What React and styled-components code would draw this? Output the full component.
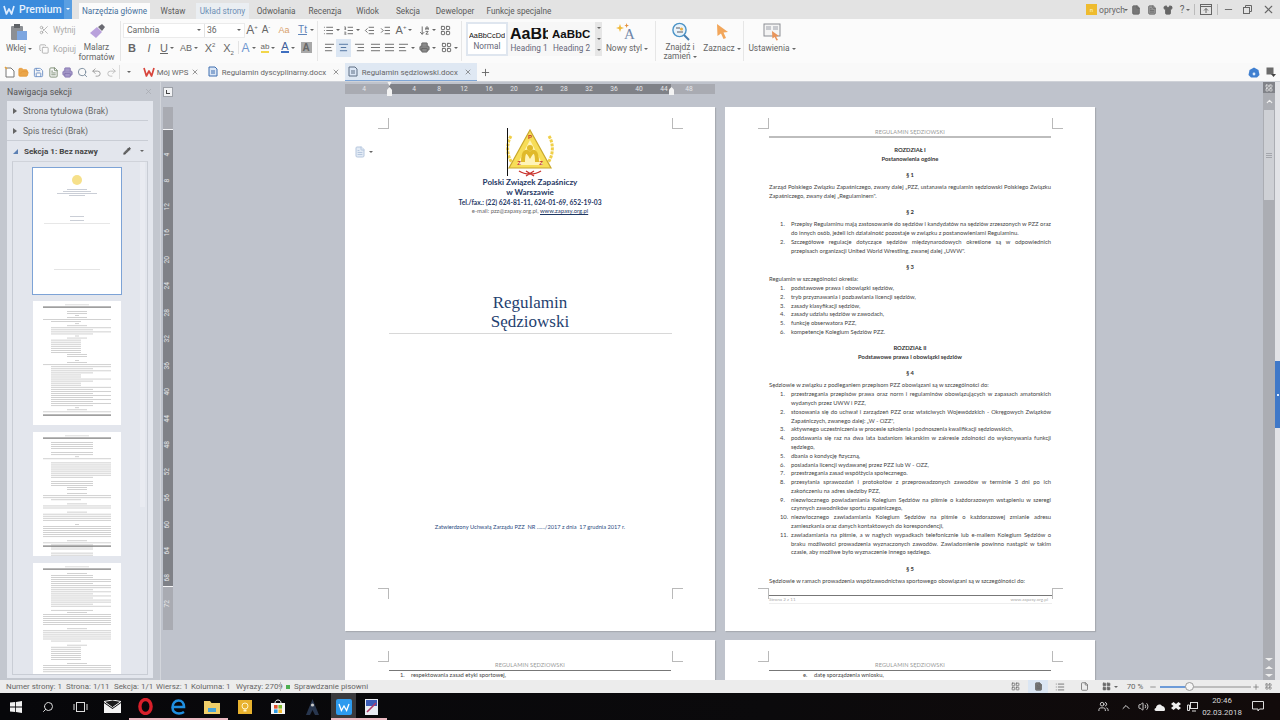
import styled, { createGlobalStyle } from 'styled-components';
import {
  AlignCenter, AlignJustify, AlignLeft, AlignRight, ArrowDownAZ, ChevronUp, Copy, File, FileText,
  FolderOpen, IndentDecrease, IndentIncrease, LayoutGrid, List, ListOrdered, Minus, Pencil, Plus,
  Printer, Redo2, Save, Scissors, Search, Shirt, Undo2, Users, Volume2, X,
} from 'lucide-react';

const GlobalStyle = createGlobalStyle`
  html, body { margin: 0; padding: 0; background: #bfc3cc; overflow: hidden; }
  * { box-sizing: border-box; }
  #root { width: 1280px; height: 720px; }
`;

const Shell = styled.div`
  width: 1280px;
  height: 720px;
  display: flex;
  flex-direction: column;
  font-family: Roboto, "Open Sans", sans-serif;
  color: #555;
  overflow: hidden;
`;

/* title bar */
const TitleBar = styled.div`
  height: 19px;
  flex: none;
  display: flex;
  background: #e3e3e3;
`;
const PremiumButton = styled.div`
  width: 72px;
  height: 19px;
  display: flex;
  align-items: center;
  background: linear-gradient(90deg, #3a8bdc 0 64px, #5a9fe2 64px);
  color: #e8f2fc;
  font-size: 10.5px;
  font-weight: 500;
  padding-left: 3px;
  gap: 4px;
  margin-right: 7px;
  position: relative;
`;
const WhiteCaret = styled.span`
  position: absolute;
  right: 2px;
  top: 8px;
  border: 2.5px solid transparent;
  border-top-color: #fff;
`;
const Tab = styled.div`
  width: ${(p) => p.$w}px;
  margin-top: 3px;
  height: 16px;
  display: flex;
  align-items: center;
  justify-content: center;
  font-size: 8.2px;
  white-space: nowrap;
  color: ${(p) => (p.$active ? '#47719c' : p.$soft ? '#6d8fb5' : '#5a5a5a')};
  background: ${(p) => (p.$active ? '#fbfbfb' : p.$soft ? '#eaeef2' : 'transparent')};
`;
const TitleRight = styled.div`
  margin-left: auto;
  display: flex;
  align-items: center;
  height: 19px;
  padding-right: 1px;
`;
const Cell = styled.div`
  width: ${(p) => p.$w}px;
  height: ${(p) => p.$h || 16}px;
  flex: none;
  display: flex;
  align-items: center;
  justify-content: center;
  gap: ${(p) => p.$gap || 2}px;
  color: ${(p) => p.$c || '#666'};
  background: ${(p) => p.$bg || 'transparent'};
  font-size: ${(p) => p.$fs || 9}px;
`;
const UserBadge = styled.div`
  width: 11px;
  height: 11px;
  background: #eebb2e;
  color: #fff3c8;
  font-size: 6px;
  display: flex;
  align-items: center;
  justify-content: center;
  margin-right: 2px;
`;
const UserName = styled.span`
  font-size: 8.6px;
  color: #666;
  width: 25px;
`;
const Divider = styled.div`
  width: 1px;
  height: ${(p) => p.$h || 11}px;
  flex: none;
  background: ${(p) => p.$c || '#bbb'};
`;
const Caret = styled.span`
  flex: none;
  width: 0;
  height: 0;
  border: 2px solid transparent;
  border-top: 2.5px solid #666;
  border-bottom: 0;
`;

/* ribbon */
const Ribbon = styled.div`
  height: 44px;
  flex: none;
  display: flex;
  align-items: center;
  background: #fbfbfb;
`;
const RibbonSep = styled.div`
  width: 1px;
  height: 40px;
  flex: none;
  background: #e6e6e6;
`;
const Group = styled.div`
  width: ${(p) => p.$w}px;
  height: 44px;
  flex: none;
  display: flex;
  flex-direction: ${(p) => (p.$col ? 'column' : 'row')};
  padding-top: 3px;
`;
const BigTool = styled.div`
  width: ${(p) => p.$w}px;
  flex: none;
  display: flex;
  flex-direction: column;
  align-items: center;
  font-size: 8.4px;
  line-height: 9.5px;
  color: #666;
  text-align: center;
`;
const BigIcon = styled.div`
  height: 19px;
  margin-bottom: ${(p) => p.$mb ?? 2}px;
  display: flex;
  align-items: center;
  justify-content: center;
`;
const SmallTools = styled.div`
  width: 40px;
  flex: none;
  display: flex;
  flex-direction: column;
  gap: 4px;
  padding-left: 1px;
`;
const SmallTool = styled.div`
  height: 15px;
  display: flex;
  align-items: center;
  gap: 4px;
  font-size: 8.3px;
  color: #aaa;
`;
const Row = styled.div`
  height: ${(p) => p.$h || 16}px;
  display: flex;
  align-items: center;
  padding-left: ${(p) => p.$pl || 0}px;
`;
const FontBox = styled.div`
  width: 122px;
  height: 15px;
  flex: none;
  display: flex;
  align-items: center;
  background: #fff;
  border: 1px solid #ebebeb;
  font-size: 8.6px;
  color: #666;
`;
const FontName = styled.div`
  width: 81px;
  padding-left: 3px;
  display: flex;
  align-items: center;
  justify-content: space-between;
  padding-right: 3px;
  border-right: 1px solid #e3e3e3;
  height: 100%;
`;
const FontSize = styled.div`
  flex: 1;
  padding-left: 2px;
  padding-right: 3px;
  display: flex;
  align-items: center;
  justify-content: space-between;
`;
const Letter = styled.span`
  font-family: "Liberation Sans", sans-serif;
  font-size: ${(p) => p.$fs || 11}px;
  font-weight: ${(p) => (p.$bold ? 700 : 400)};
  font-style: ${(p) => (p.$it ? 'italic' : 'normal')};
  text-decoration: ${(p) => (p.$u ? 'underline' : 'none')};
  color: ${(p) => p.$c || '#666'};
  border-bottom: ${(p) => (p.$bar ? `2px solid ${p.$bar}` : 'none')};
  line-height: ${(p) => (p.$bar ? '9px' : '12px')};
  white-space: nowrap;
`;
const Sup = styled.sup`
  font-size: 6px;
  line-height: 0;
`;
const Sub = styled.sub`
  font-size: 6px;
  line-height: 0;
`;
const HighlightA = styled.span`
  width: 11px;
  height: 11px;
  background: #a8a8a8;
  color: #666;
  font-family: "Liberation Sans", sans-serif;
  font-weight: 700;
  font-size: 10px;
  display: flex;
  align-items: center;
  justify-content: center;
`;
const Gallery = styled.div`
  width: 136px;
  height: 34px;
  margin-left: 4px;
  flex: none;
  display: flex;
  background: #f7f7f7;
`;
const StyleItem = styled.div`
  width: ${(p) => p.$w}px;
  flex: none;
  display: flex;
  flex-direction: column;
  align-items: center;
  justify-content: space-between;
  padding: 6px 0 3px;
  background: ${(p) => (p.$sel ? '#fff' : 'transparent')};
  border: ${(p) => (p.$sel ? '2px solid #dfe6ef' : 'none')};
  overflow: hidden;
  font-size: 8.2px;
  color: #667;
  height: 34px;
`;
const StyleSample = styled.div`
  font-family: "Liberation Sans", "Open Sans", sans-serif;
  font-size: ${(p) => p.$fs}px;
  font-weight: ${(p) => p.$fw || 400};
  line-height: 12px;
  color: #111;
  white-space: nowrap;
  width: ${(p) => p.$cw}px;
  overflow: hidden;
  text-align: left;
`;
const GalleryScroll = styled.div`
  width: 7px;
  margin-left: auto;
  background: #e6e6e6;
  display: flex;
  flex-direction: column;
  align-items: center;
  justify-content: space-around;
`;

/* quick access row and document tabs */
const QuickRow = styled.div`
  height: 18px;
  flex: none;
  display: flex;
  align-items: center;
  padding-left: 2px;
  background: #f9f9f9;
`;
const DocTab = styled.div`
  width: ${(p) => p.$w}px;
  height: 18px;
  flex: none;
  display: flex;
  align-items: center;
  padding: 0 5px 0 ${(p) => p.$pl || 5}px;
  gap: 2px;
  font-size: 7.8px;
  color: #666;
  white-space: nowrap;
  background: ${(p) => (p.$active ? '#dfe8f3' : 'transparent')};
  box-shadow: ${(p) => (p.$active ? 'inset 0 -1px 0 #7fa6d6' : 'none')};
`;
const DocTabName = styled.span`
  flex: 1;
`;
const QuickRight = styled.div`
  margin-left: auto;
  display: flex;
  gap: 6px;
  padding-right: 4px;
  align-items: center;
`;

/* main */
const Main = styled.div`
  height: 599px;
  flex: none;
  display: flex;
  background: #bfc3cc;
  border-top: 1px solid #cfd2d8;
`;
const Sidebar = styled.div`
  width: 161px;
  flex: none;
  display: flex;
  flex-direction: column;
  background: #c3c7cf;
  border-right: 1px solid #d3d6dc;
  padding: 0 7px 2px;
`;
const SideHead = styled.div`
  height: 19px;
  display: flex;
  align-items: center;
  justify-content: space-between;
  font-size: 8.7px;
  color: #555;
`;
const SidePanel = styled.div`
  flex: 1;
  min-height: 0;
  background: #e3e6ed;
  display: flex;
  flex-direction: column;
  width: 146px;
`;
const SecRow = styled.div`
  height: 20px;
  flex: none;
  display: flex;
  align-items: center;
  gap: 6px;
  padding-left: 6px;
  margin: 0 5px 0 0;
  font-size: ${(p) => (p.$bold ? 8.1 : 8.6)}px;
  font-weight: ${(p) => (p.$bold ? 700 : 400)};
  color: ${(p) => (p.$bold ? '#444' : '#666')};
  border-bottom: ${(p) => (p.$bold ? 'none' : '1px solid #c9cdd5')};
`;
const SecTri = styled.span`
  flex: none;
  width: 0;
  height: 0;
  border-style: solid;
  border-width: 3px 0 3px 4px;
  border-color: transparent transparent transparent #666;
`;
const SecTriOpen = styled.span`
  flex: none;
  width: 0;
  height: 0;
  border-style: solid;
  border-width: 0 0 5px 5px;
  border-color: transparent transparent #5c80b4 transparent;
`;
const SecTools = styled.span`
  margin-left: auto;
  display: flex;
  align-items: center;
  gap: 9px;
  padding-right: 4px;
`;
const ThumbBox = styled.div`
  flex: 1;
  min-height: 0;
  margin: 0 5px 3px;
  border: 1px solid #c9cdd5;
  border-top-color: #d0d3da;
  padding: 6px 0 0 20px;
  display: flex;
  flex-direction: column;
  gap: 7px;
  overflow: hidden;
  position: relative;
`;
const ThumbTrack = styled.div`
  position: absolute;
  top: 0;
  right: 2px;
  width: 5px;
  height: 345px;
  background: #e9ebf1;
`;
const ThumbPage = styled.div`
  width: 88px;
  height: ${(p) => (p.$first ? 126 : 124)}px;
  flex: none;
  background: #fff;
  box-shadow: ${(p) => (p.$first ? '0 0 0 1px #7da3d6' : 'none')};
`;

const Workspace = styled.div`
  flex: 1;
  min-width: 0;
  display: flex;
`;
const VRulerCol = styled.div`
  width: 12px;
  flex: none;
  margin-left: 2px;
  padding-top: 5px;
`;
const CornerBox = styled.div`
  width: 10px;
  height: 10px;
  background: #f2f3f5;
  border: 1px solid #9da1a8;
  margin-bottom: 10px;
  position: relative;
  &::after {
    content: '';
    position: absolute;
    left: 2px;
    top: 2px;
    width: 3px;
    height: 3px;
    border-left: 1px solid #444;
    border-bottom: 1px solid #444;
  }
`;
const VRuler = styled.div`
  width: 10px;
  height: 523px;
  padding-top: 33.75px;
  background: linear-gradient(180deg, #a9abb2 0 22px, #f4f4f6 22px 23px, #7f8187 23px 479px, #f4f4f6 479px 480px, #a9abb2 480px);
`;
const VTick = styled.div`
  height: 26.5px;
  display: flex;
  align-items: center;
  justify-content: center;
  font-size: 6.6px;
  color: #e6e7ea;
  writing-mode: vertical-rl;
  transform: rotate(180deg);
`;
const DocCol = styled.div`
  flex: 1;
  min-width: 0;
  padding: 2px 0 0 170px;
  overflow: hidden;
`;
const HRuler = styled.div`
  width: 370px;
  height: 10px;
  display: flex;
  align-items: center;
  padding-left: 6.5px;
  position: relative;
  margin-bottom: 13px;
  background: linear-gradient(90deg, #a9abb2 0 44px, #7f8187 44px 326px, #a9abb2 326px);
`;
const HTick = styled.div`
  width: 25px;
  flex: none;
  text-align: center;
  font-size: 6.6px;
  line-height: 10px;
  color: #e6e7ea;
`;
const IndentMark = styled.div`
  position: absolute;
  left: ${(p) => p.$x}px;
  top: ${(p) => p.$top}px;
  width: 5px;
  height: ${(p) => p.$h}px;
  background: #f3f3f3;
  clip-path: ${(p) => p.$clip || 'none'};
`;
const Pages = styled.div`
  display: grid;
  grid-template-columns: 370px 370px;
  column-gap: 10px;
  row-gap: 9px;
`;
const Page = styled.div`
  height: 524px;
  background: #fff;
  position: relative;
  font-family: Lato, "Open Sans", sans-serif;
  box-shadow: 1px 1px 1px #a7aab1;
  overflow: hidden;
`;
const Mark = styled.div`
  position: absolute;
  width: 11px;
  height: 11px;
  top: ${(p) => (p.$bottom ? 481 : 11)}px;
  left: ${(p) => (p.$right ? 327 : 33)}px;
  border-style: solid;
  border-color: #b9b9b9;
  border-width: ${(p) => (p.$bottom ? '1px 0 0 0' : '0 0 1px 0')};
  ${(p) => (p.$right ? 'border-left-width: 1px;' : 'border-right-width: 1px;')}
`;

const CoverPage = styled(Page)`
  display: flex;
  flex-direction: column;
  align-items: center;
  padding-top: 21px;
`;
const PaperIcon = styled.div`
  position: absolute;
  left: 9px;
  top: 39px;
  display: flex;
  align-items: center;
  gap: 3px;
`;
const LogoWrap = styled.div`
  height: 49px;
  position: relative;
`;
const TextCursor = styled.span`
  position: absolute;
  left: 0.5px;
  top: 0;
  width: 1.5px;
  height: 48px;
  background: #111;
`;
const OrgLine = styled.div`
  font-size: ${(p) => p.$fs}px;
  line-height: ${(p) => p.$lh}px;
  font-weight: ${(p) => p.$fw || 700};
  color: ${(p) => p.$c || '#1f3864'};
  white-space: nowrap;
`;
const WebLink = styled.span`
  text-decoration: underline;
  color: #1f3864;
`;
const CoverTitle = styled.div`
  margin-top: 78px;
  width: 283px;
  border-bottom: 1px solid #d8d8d8;
  padding-bottom: 2px;
  text-align: center;
  font-family: "Liberation Serif", serif;
  font-size: 17px;
  line-height: 19px;
  color: #1f3f70;
`;
const CoverNote = styled.div`
  margin-top: 188px;
  font-size: 5.66px;
  line-height: 9px;
  color: #2a4a80;
  white-space: pre;
`;

const TextPage = styled(Page)`
  padding: 21px 44px 0;
  font-size: 5.82px;
  line-height: 8.78px;
  color: #444;
`;
const RunHead = styled.div`
  text-align: center;
  color: #999;
  font-size: 5.6px;
  line-height: 8px;
  height: 10px;
  border-bottom: ${(p) => (p.$thin ? '1px solid #777' : '2px solid #bdbdbd')};
  margin-bottom: ${(p) => (p.$thin ? 0 : 8)}px;
  letter-spacing: 0.1px;
`;
const Center = styled.div`
  text-align: center;
  font-weight: 700;
  color: #333;
`;
const Clause = styled(Center)`
  margin: 7.5px 0 3.4px;
`;
const Para = styled.div`
  text-align: justify;
`;
const Items = styled.div`
  padding-left: ${(p) => p.$pl ?? 11}px;
`;
const Item = styled.div`
  display: flex;
`;
const Num = styled.span`
  width: 11px;
  flex: none;
`;
const ItemText = styled.span`
  flex: 1;
  text-align: justify;
`;
const PageFoot = styled.div`
  position: absolute;
  left: 44px;
  width: 283px;
  top: 488px;
  border-top: 1px solid #777;
  border-bottom: 1px solid #eee;
  display: flex;
  justify-content: space-between;
  padding: 0 4px 0 0;
  font-size: 4.6px;
  line-height: 7px;
  color: #aaa;
`;

const DocScrollbar = styled.div`
  width: 12px;
  flex: none;
  background: #abadb3;
  display: flex;
  flex-direction: column;
  align-items: center;
`;
const ScrollCorner = styled.div`
  width: 12px;
  height: 11px;
  background: #818389;
  display: flex;
  align-items: center;
  justify-content: center;
  margin-bottom: 4px;
`;
const ScrollThumb = styled.div`
  width: 10px;
  height: 90px;
  margin-top: 4px;
  background: #ced0d5;
  display: flex;
  flex-direction: column;
  align-items: center;
  justify-content: center;
  gap: 1px;
`;
const Grip = styled.span`
  width: 6px;
  height: 1px;
  background: #a4a6ac;
`;
const ScrollBottom = styled.div`
  margin-top: auto;
  display: flex;
  flex-direction: column;
  align-items: center;
  gap: 5px;
  padding-bottom: 3px;
`;
const Arrow = styled.span`
  width: 0;
  height: 0;
  border: 4px solid transparent;
  border-width: ${(p) => (p.$up ? '0 4px 3px' : '3px 4px 0')};
  border-color: ${(p) => (p.$up ? 'transparent transparent #eee' : '#eee transparent transparent')};
`;
const SideStrip = styled.div`
  width: 5px;
  flex: none;
  background: #e2e3e7;
  position: relative;
`;
const BlueTab = styled.div`
  position: absolute;
  top: 279px;
  left: 0;
  width: 5px;
  height: 67px;
  background: #3f78c8;
  display: flex;
  align-items: center;
  justify-content: center;
  &::after {
    content: '';
    width: 2px;
    height: 2px;
    background: #dfeafa;
  }
`;

/* status bar */
const StatusBar = styled.div`
  height: 13px;
  flex: none;
  display: flex;
  align-items: center;
  background: #ececec;
  padding-left: 6px;
  font-size: 7.9px;
  color: #666;
  white-space: nowrap;
`;
const StatusItem = styled.span`
  width: ${(p) => p.$w}px;
  flex: none;
`;
const SpellDot = styled.span`
  width: 4px;
  height: 4px;
  background: #4caf50;
  margin: 0 4px 0 5px;
  flex: none;
`;
const StatusRight = styled.div`
  margin-left: auto;
  display: flex;
  align-items: center;
  height: 13px;
  padding-right: 3px;
`;
const Slider = styled.div`
  width: 91px;
  height: 2px;
  flex: none;
  background: linear-gradient(90deg, #6d9bd8 0 30px, #bdbdbd 30px);
  position: relative;
  margin: 0 1px;
`;
const SliderKnob = styled.span`
  position: absolute;
  left: 25px;
  top: -4px;
  width: 9px;
  height: 9px;
  border-radius: 50%;
  background: #f5f5f5;
  border: 1px solid #999;
`;

/* taskbar */
const Taskbar = styled.div`
  height: 27px;
  flex: none;
  display: flex;
  align-items: center;
  background: linear-gradient(90deg, #07070a, #0b0a0c 60%, #120b0b);
  color: #e8e8e8;
`;
const TaskCell = styled.div`
  width: ${(p) => p.$w}px;
  height: 27px;
  flex: none;
  display: flex;
  align-items: center;
  justify-content: center;
  background: ${(p) => (p.$active ? '#3a3a3d' : 'transparent')};
  box-shadow: ${(p) => (p.$open ? 'inset 0 -2px 0 #e9b8c0' : 'none')};
`;
const TrayRight = styled.div`
  margin-left: auto;
  display: flex;
  align-items: center;
  height: 27px;
  padding-right: 8px;
`;
const Clock = styled.div`
  width: 44px;
  flex: none;
  text-align: center;
  font-size: 7.9px;
  line-height: 12px;
  color: #d8d8d8;
`;

const PasteIcon = () => (
  <svg width="18" height="18" viewBox="0 0 18 18">
    <rect x="1" y="3" width="12" height="14" rx="1" fill="#8c8f94" />
    <rect x="4" y="1" width="6" height="4" fill="#5f6267" />
    <rect x="7" y="8" width="10" height="9" fill="#7da6e0" />
  </svg>
);
const BrushIcon = () => (
  <svg width="18" height="18" viewBox="0 0 18 18">
    <path d="M2 10 L9 4 L14 9 L8 15 Z" fill="#b9a1dc" />
    <path d="M10 4 L14 1 L17 4 L14 8 Z" fill="#6a6a72" />
  </svg>
);
const WandIcon = () => (
  <svg width="22" height="18" viewBox="0 0 22 18">
    <path d="M3 4 L4 1 L5 4 L8 5 L5 6 L4 9 L3 6 L0 5 Z" fill="#f0b93a" />
    <path d="M10 2 L10.6 0 L11.2 2 L13 2.6 L11.2 3.2 L10.6 5 L10 3.2 L8.4 2.6 Z" fill="#e58f3a" />
    <text x="8" y="16" fontFamily="Liberation Serif" fontSize="15" fill="#6f86a8">A</text>
  </svg>
);
const FindIcon = () => (
  <svg width="19" height="19" viewBox="0 0 19 19" fill="none">
    <circle cx="8.5" cy="8" r="6.6" stroke="#4a93c7" strokeWidth="1.4" fill="#e9f3fa" />
    <path d="M13 13 L18 18" stroke="#4a7fb0" strokeWidth="2" />
    <path d="M5 6 L9 6 M6 10 L12 10" stroke="#8a8f96" strokeWidth="1.4" />
    <circle cx="10.5" cy="7" r="1.6" fill="#e8b04a" />
  </svg>
);
const PointerIcon = () => (
  <svg width="13" height="17" viewBox="0 0 13 17">
    <path d="M1 1 L12 9 L7.5 9.5 L10 15 L7.5 16 L5 10.5 L1.5 13 Z" fill="#f2a65a" />
  </svg>
);
const SetupIcon = () => (
  <svg width="19" height="18" viewBox="0 0 19 18" fill="none">
    <rect x="1" y="1" width="16" height="12" stroke="#8b8e94" fill="#f4f4f4" />
    <rect x="3" y="3" width="5" height="4" fill="#c8cacf" />
    <rect x="10" y="3" width="5" height="4" fill="#c8cacf" />
    <path d="M9 8 L16 13 L13 13.4 L15 17 L13.4 17.6 L11.6 14 L9.4 15.6 Z" fill="#e9945a" />
  </svg>
);
const WpsMark = ({ size = 11, c = '#fff' }) => (
  <svg width={size} height={size} viewBox="0 0 12 12" fill="none">
    <path d="M1 2 L3.4 10 L6 5 L8.6 10 L11 2" stroke={c} strokeWidth="1.7" strokeLinejoin="round" />
  </svg>
);
const NewFileIcon = () => (
  <svg width="11" height="12" viewBox="0 0 11 12" fill="none">
    <path d="M2 2 H7 L10 5 V11 H2 Z" stroke="#777" fill="#fff" />
    <path d="M1 1 L3 3" stroke="#e8a23a" strokeWidth="1.4" />
  </svg>
);
const DocChip = ({ c = '#3f6fb0' }) => (
  <svg width="12" height="12" viewBox="0 0 12 12" fill="none">
    <path d="M1 1 H7 L9 3 V10 H1 Z" fill="#dbe6f5" stroke={c} />
    <path d="M3 5 H7 M3 7 H7" stroke={c} />
  </svg>
);
const CloudBadge = () => (
  <svg width="12" height="11" viewBox="0 0 12 11">
    <path d="M6 0.5 L10.5 3 L11.5 8 L9 10.5 H3 L0.5 8 L1.5 3 Z" fill="#3f7fd0" />
    <circle cx="6" cy="7" r="1.4" fill="#dbe9fa" />
  </svg>
);
const PanelMenuIcon = () => (
  <svg width="10" height="10" viewBox="0 0 10 10">
    <rect x="0.5" y="0.5" width="7" height="7" fill="#6b6b6b" />
    <path d="M5 7 H10 L7.5 10 Z" fill="#444" />
  </svg>
);
const WindowUpIcon = () => (
  <svg width="12" height="11" viewBox="0 0 12 11" fill="none" stroke="#666">
    <rect x="0.5" y="0.5" width="11" height="10" />
    <path d="M1 2.5 H11" />
    <path d="M6 9 V4.5 M4 6.5 L6 4.5 L8 6.5" />
  </svg>
);
const RestoreIcon = () => (
  <svg width="9" height="9" viewBox="0 0 9 9" fill="none" stroke="#666">
    <rect x="0.5" y="2.5" width="6" height="6" />
    <path d="M2.5 2.5 V0.5 H8.5 V6.5 H6.5" />
  </svg>
);

const PzzLogo = () => (
  <svg width="48" height="49" viewBox="0 0 48 49" fill="none">
    <path d="M5 8 C0 16 0 30 9 38" stroke="#f0cf48" strokeWidth="3" strokeDasharray="3 1" />
    <path d="M43 8 C48 16 48 30 39 38" stroke="#f0cf48" strokeWidth="3" strokeDasharray="3 1" />
    <path d="M24 2 L45 40 H3 Z" fill="#f7dd58" stroke="#c9a82d" strokeWidth="1.2" />
    <path d="M24 12 L37 37 H11 Z" fill="#fff4b8" />
    <path d="M17 34 C17 22 21 22 24 27 C27 22 31 22 31 34" stroke="#e0b92a" strokeWidth="4" />
    <circle cx="24" cy="20" r="3" fill="#e0b92a" />
    <text x="24" y="11" textAnchor="middle" fontFamily="Liberation Sans" fontSize="6" fontWeight="700" fill="#c4352a">P</text>
    <text x="13" y="37" textAnchor="middle" fontFamily="Liberation Sans" fontSize="6" fontWeight="700" fill="#c4352a">Z</text>
    <text x="35" y="37" textAnchor="middle" fontFamily="Liberation Sans" fontSize="6" fontWeight="700" fill="#c4352a">Z</text>
    <path d="M13 43 C19 47 29 47 35 43 M20 43 L28 48 M28 43 L20 48" stroke="#c8322c" strokeWidth="1.4" />
  </svg>
);

const THUMB_SPECS = [
  null,
  'hccpcfspcijijpcssssssscc pcfijijssijssijijijijijpcfm',
  'hjjjj jjpf iiiiiiij jjjcc cffs cff cffff pffffff cfjjj jjm',
  'hcjjiijiijijijiiji jcffffff cfffffs csssssss cffffm',
];

function ThumbLines({ index }) {
  if (index === 0) {
    const rows = [[34, 20, 21], [30, 28, 23], [24, 40, 25], [36, 16, 27], [37, 14, 48], [37, 14, 52]];
    return (
      <svg width="88" height="126" viewBox="0 0 88 126">
        <circle cx="44" cy="12" r="5" fill="#f6e08a" />
        {rows.map(([x, w, y]) => (
          <rect key={y} x={x} y={y} width={w} height="0.7" fill="#b4b9c4" />
        ))}
        <rect x="11" y="55" width="66" height="0.7" fill="#ddd" />
        <rect x="21" y="101" width="46" height="0.7" fill="#d8d8d8" />
      </svg>
    );
  }
  const shapes = { c: [34, 20], f: [10, 68], s: [18, 30], i: [18, 60], j: [18, 42], p: [42, 4] };
  const spec = THUMB_SPECS[index];
  let y = 8;
  const rects = [];
  [...spec].forEach((ch, i) => {
    if (ch === 'h') {
      rects.push(<rect key="h0" x="32" y="3.5" width="24" height="0.7" fill="#ccc" />);
      rects.push(<rect key="h1" x="10" y="5.5" width="68" height="1.2" fill="#777" />);
    } else if (ch === 'm') {
      rects.push(<rect key="m" x="10" y="113.5" width="68" height="1.2" fill="#777" />);
    } else if (ch !== ' ') {
      const [x, w] = shapes[ch];
      rects.push(<rect key={i} x={x} y={y} width={w} height="0.7" fill="#bdbdbd" />);
    }
    y += 2.05;
  });
  return (
    <svg width="88" height="124" viewBox="0 0 88 124">
      {rects}
    </svg>
  );
}

const TABS = [
  ['Narzędzia główne', 71, 'active'],
  ['Wstaw', 46],
  ['Układ strony', 53, 'soft'],
  ['Odwołania', 54],
  ['Recenzja', 44],
  ['Widok', 41],
  ['Sekcja', 40],
  ['Deweloper', 54],
  ['Funkcje specjalne', 74],
];

const H_TICKS = ['4', '', '4', '8', '12', '16', '20', '24', '28', '32', '36', '40', '44', '48'];
const V_TICKS = Array.from({ length: 18 }, (_, i) => (i + 1) * 4);

const SCOPE = [
  'podstawowe prawa i obowiązki sędziów,',
  'tryb przyznawania i pozbawiania licencji sędziów,',
  'zasady klasyfikacji sędziów,',
  'zasady udziału sędziów w zawodach,',
  'funkcję obserwatora PZZ,',
  'kompetencje Kolegium Sędziów PZZ.',
];

const DUTIES = [
  'przestrzegania przepisów prawa oraz norm i regulaminów obowiązujących w zapasach amatorskich wydanych przez UWW i PZZ,',
  'stosowania się do uchwał i zarządzeń PZZ oraz właściwych Wojewódzkich - Okręgowych Związków Zapaśniczych, zwanego dalej: „W - OZZ",',
  'aktywnego uczestniczenia w procesie szkolenia i podnoszenia kwalifikacji sędziowskich,',
  'poddawania się raz na dwa lata badaniom lekarskim w zakresie zdolności do wykonywania funkcji sędziego,',
  'dbania o kondycję fizyczną,',
  'posiadania licencji wydawanej przez PZZ lub W - OZZ,',
  'przestrzegania zasad współżycia społecznego.',
  'przesyłania sprawozdań i protokołów z przeprowadzonych zawodów w terminie 3 dni po ich zakończeniu na adres siedziby PZZ,',
  'niezwłocznego powiadamiania Kolegium Sędziów na piśmie o każdorazowym wstąpieniu w szeregi czynnych zawodników sportu zapaśniczego,',
  'niezwłocznego zawiadamiania Kolegium Sędziów na piśmie o każdorazowej zmianie adresu zamieszkania oraz danych kontaktowych do korespondencji,',
  'zawiadamiania na piśmie, a w nagłych wypadkach telefonicznie lub e-mailem Kolegium Sędziów o braku możliwości prowadzenia wyznaczonych zawodów. Zawiadomienie powinno nastąpić w takim czasie, aby możliwe było wyznaczenie innego sędziego.',
];

const RULES = [
  'Przepisy Regulaminu mają zastosowanie do sędziów i kandydatów na sędziów zrzeszonych w PZZ oraz do innych osób, jeżeli ich działalność pozostaje w związku z postanowieniami Regulaminu.',
  'Szczegółowe regulacje dotyczące sędziów międzynarodowych określone są w odpowiednich przepisach organizacji United World Wrestling, zwanej dalej „UWW".',
];

const Numbered = ({ items }) => (
  <Items>
    {items.map((t, i) => (
      <Item key={t}>
        <Num>{i + 1}.</Num>
        <ItemText>{t}</ItemText>
      </Item>
    ))}
  </Items>
);

const Marks = () => (
  <>
    <Mark />
    <Mark $right />
    <Mark $bottom />
    <Mark $bottom $right />
  </>
);

export default function App() {
  return (
    <Shell>
      <GlobalStyle />
      <TitleBar>
        <PremiumButton>
          <WpsMark size={12} c="#dcecff" />
          Premium
          <WhiteCaret />
        </PremiumButton>
        {TABS.map(([name, w, kind]) => (
          <Tab key={name} $w={w} $active={kind === 'active'} $soft={kind === 'soft'}>{name}</Tab>
        ))}
        <TitleRight>
          <UserBadge>n</UserBadge>
          <UserName>oprych</UserName>
          <Caret />
          <Cell $w={16}><File size={10} fill="#777" /></Cell>
          <Cell $w={16}><FileText size={10} fill="#999" /></Cell>
          <Cell $w={16}><Shirt size={10} fill="#666" /></Cell>
          <Cell $w={18} $fs={10} $gap={2}>?<Caret /></Cell>
          <Divider />
          <Cell $w={22}><WindowUpIcon /></Cell>
          <Divider />
          <Cell $w={20}><Minus size={11} /></Cell>
          <Cell $w={19}><RestoreIcon /></Cell>
          <Cell $w={22}><X size={13} /></Cell>
        </TitleRight>
      </TitleBar>

      <Ribbon>
        <Group $w={120}>
          <BigTool $w={38}>
            <BigIcon $mb={3}><PasteIcon /></BigIcon>
            <Row $h={10}>Wklej&nbsp;<Caret /></Row>
          </BigTool>
          <SmallTools>
            <SmallTool><Scissors size={10} />Wytnij</SmallTool>
            <SmallTool><Copy size={10} />Kopiuj</SmallTool>
          </SmallTools>
          <BigTool $w={37}>
            <BigIcon><BrushIcon /></BigIcon>
            Malarz
            <br />
            formatów
          </BigTool>
        </Group>
        <RibbonSep />
        <Group $w={196} $col>
          <Row $pl={2}>
            <FontBox>
              <FontName>Cambria<Caret /></FontName>
              <FontSize>36<Caret /></FontSize>
            </FontBox>
            <Cell $w={14}><Letter $fs={12}>A<Sup>+</Sup></Letter></Cell>
            <Cell $w={14}><Letter $fs={10}>A<Sup>-</Sup></Letter></Cell>
            <Cell $w={22}><Letter $fs={9} $c="#d8a06a">Aa</Letter></Cell>
            <Cell $w={22} $gap={3}><Letter $fs={10} $u $c="#5f84b8">Tt</Letter><Caret /></Cell>
          </Row>
          <Row $h={19} $pl={2}>
            <Cell $w={18}><Letter $bold>B</Letter></Cell>
            <Cell $w={16}><Letter $it>I</Letter></Cell>
            <Cell $w={20}><Letter $u>U</Letter><Caret /></Cell>
            <Cell $w={24}><Letter $fs={9}>AB</Letter><Caret /></Cell>
            <Cell $w={18}><Letter>X<Sup>2</Sup></Letter></Cell>
            <Cell $w={19}><Letter>X<Sub>2</Sub></Letter></Cell>
            <Divider $h={13} $c="#e3e3e3" />
            <Cell $w={19}><Letter $fs={12} $c="#6f97d0">A</Letter><Caret /></Cell>
            <Cell $w={20}><Letter $fs={8} $bar="#f2d64a">ab</Letter><Caret /></Cell>
            <Cell $w={20}><Letter $bar="#3f6fc0" $c="#3f5f9a">A</Letter><Caret /></Cell>
            <Cell $w={16}><HighlightA>A</HighlightA></Cell>
          </Row>
        </Group>
        <RibbonSep />
        <Group $w={143} $col>
          <Row $pl={2}>
            <Cell $w={22}><List size={11} /><Caret /></Cell>
            <Cell $w={18}><ListOrdered size={11} /><Caret /></Cell>
            <Cell $w={18}><IndentDecrease size={11} /></Cell>
            <Cell $w={14}><IndentIncrease size={11} /></Cell>
            <Cell $w={24}><Letter>A<Sup>+</Sup></Letter><Caret /></Cell>
            <Cell $w={22}><ArrowDownAZ size={11} /><Caret /></Cell>
            <Cell $w={14}><LayoutGrid size={11} /></Cell>
          </Row>
          <Row $h={19} $pl={4}>
            <Cell $w={14}><AlignLeft size={11} /></Cell>
            <Cell $w={15} $h={18} $bg="#dbe6f3" $c="#4a6f9c"><AlignCenter size={11} /></Cell>
            <Cell $w={17}><AlignRight size={11} /></Cell>
            <Cell $w={14}><AlignJustify size={11} /></Cell>
            <Cell $w={14}><AlignJustify size={11} /></Cell>
            <Cell $w={20}><AlignLeft size={11} /><Caret /></Cell>
            <Cell $w={22}><Printer size={11} fill="#8a8a8a" /><Caret /></Cell>
            <Cell $w={22}><LayoutGrid size={11} /><Caret /></Cell>
          </Row>
        </Group>
        <RibbonSep />
        <Group $w={193}>
          <Gallery>
            <StyleItem $w={42} $sel>
              <StyleSample $fs={7.3} $cw={36}>AaBbCcDd</StyleSample>
              Normal
            </StyleItem>
            <StyleItem $w={42}>
              <StyleSample $fs={16} $fw={700} $cw={38}>AaBb</StyleSample>
              Heading 1
            </StyleItem>
            <StyleItem $w={43}>
              <StyleSample $fs={11.5} $fw={700} $cw={39}>AaBbC</StyleSample>
              Heading 2
            </StyleItem>
            <GalleryScroll><Caret /><Caret /><Caret /></GalleryScroll>
          </Gallery>
          <BigTool $w={50}>
            <BigIcon $mb={3}><WandIcon /></BigIcon>
            <Row $h={10}>Nowy styl&nbsp;<Caret /></Row>
          </BigTool>
        </Group>
        <RibbonSep />
        <Group $w={87}>
          <BigTool $w={48}>
            <BigIcon $mb={2}><FindIcon /></BigIcon>
            Znajdź i
            <Row $h={9}>zamień&nbsp;<Caret /></Row>
          </BigTool>
          <BigTool $w={36}>
            <BigIcon $mb={3}><PointerIcon /></BigIcon>
            <Row $h={10}>Zaznacz&nbsp;<Caret /></Row>
          </BigTool>
        </Group>
        <RibbonSep />
        <Group $w={56}>
          <BigTool $w={56}>
            <BigIcon $mb={3}><SetupIcon /></BigIcon>
            <Row $h={10}>Ustawienia&nbsp;<Caret /></Row>
          </BigTool>
        </Group>
      </Ribbon>

      <QuickRow>
        <Cell $w={14.6}><NewFileIcon /></Cell>
        <Cell $w={14.6} $c="#e59a3c"><FolderOpen size={11} fill="#eba64a" /></Cell>
        <Cell $w={14.6} $c="#6c8fc4"><Save size={11} /></Cell>
        <Cell $w={14.6} $c="#7a8b72"><FileText size={11} /></Cell>
        <Cell $w={14.6} $c="#8576b0"><Printer size={11} fill="#a599c9" /></Cell>
        <Cell $w={14.6} $c="#7a8b9c"><Search size={11} /></Cell>
        <Cell $w={14.6} $c="#999"><Undo2 size={11} /></Cell>
        <Cell $w={14.6} $c="#bbb"><Redo2 size={11} /></Cell>
        <Divider $h={14} $c="#ddd" />
        <Cell $w={18}><Caret /></Cell>
        <DocTab $w={66}>
          <WpsMark size={12} c="#d8453c" />
          <DocTabName>Mój WPS</DocTabName>
          <X size={8} />
        </DocTab>
        <DocTab $w={141} $pl={4}>
          <DocChip />
          <DocTabName>Regulamin dyscyplinarny.docx</DocTabName>
          <X size={8} />
        </DocTab>
        <DocTab $w={132} $active $pl={3}>
          <DocChip c="#5f6f83" />
          <DocTabName>Regulamin sędziowski.docx</DocTabName>
          <X size={8} />
        </DocTab>
        <Cell $w={18}><Plus size={11} /></Cell>
        <QuickRight>
          <CloudBadge />
          <PanelMenuIcon />
        </QuickRight>
      </QuickRow>

      <Main>
        <Sidebar>
          <SideHead>
            Nawigacja sekcji
            <X size={9} color="#a8abb2" />
          </SideHead>
          <SidePanel>
            <SecRow><SecTri />Strona tytułowa (Brak)</SecRow>
            <SecRow><SecTri />Spis treści (Brak)</SecRow>
            <SecRow $bold>
              <SecTriOpen />
              Sekcja 1: Bez nazwy
              <SecTools><Pencil size={8} fill="#666" /><Caret /></SecTools>
            </SecRow>
            <ThumbBox>
              <ThumbTrack />
              {[0, 1, 2, 3].map((i) => (
                <ThumbPage key={i} $first={i === 0}><ThumbLines index={i} /></ThumbPage>
              ))}
            </ThumbBox>
          </SidePanel>
        </Sidebar>

        <Workspace>
          <VRulerCol>
            <CornerBox />
            <VRuler>
              {V_TICKS.map((n) => <VTick key={n}>{n}</VTick>)}
            </VRuler>
          </VRulerCol>

          <DocCol>
            <HRuler>
              {H_TICKS.map((n, i) => <HTick key={i}>{n}</HTick>)}
              <IndentMark $x={42} $top={-3} $h={5} $clip="polygon(0 0, 100% 0, 50% 100%)" />
              <IndentMark $x={42} $top={3} $h={9} $clip="polygon(50% 0, 100% 30%, 100% 100%, 0 100%, 0 30%)" />
              <IndentMark $x={324} $top={3} $h={8} $clip="polygon(50% 0, 100% 30%, 100% 100%, 0 100%, 0 30%)" />
            </HRuler>
            <Pages>
              <CoverPage>
                <Marks />
                <PaperIcon>
                  <FileText size={12} color="#b6c7de" fill="#e3ebf5" />
                  <Caret />
                </PaperIcon>
                <LogoWrap>
                  <PzzLogo />
                  <TextCursor />
                </LogoWrap>
                <OrgLine $fs={8.1} $lh={10}>Polski Związek Zapaśniczy</OrgLine>
                <OrgLine $fs={8.1} $lh={10}>w Warszawie</OrgLine>
                <OrgLine $fs={6.7} $lh={10}>Tel./fax.: (22) 624-81-11, 624-01-69, 652-19-03</OrgLine>
                <OrgLine $fs={5.9} $lh={8} $fw={400} $c="#666">
                  e-mail: pzz@zapasy.org.pl, <WebLink>www.zapasy.org.pl</WebLink>
                </OrgLine>
                <CoverTitle>
                  Regulamin
                  <br />
                  Sędziowski
                </CoverTitle>
                <CoverNote>Zatwierdzony Uchwałą Zarządu PZZ  NR ....../2017 z dnia  17 grudnia 2017 r.</CoverNote>
              </CoverPage>

              <TextPage>
                <Marks />
                <RunHead>REGULAMIN SĘDZIOWSKI</RunHead>
                <Center>ROZDZIAŁ I</Center>
                <Center>Postanowienia ogólne</Center>
                <Clause>§ 1</Clause>
                <Para>Zarząd Polskiego Związku Zapaśniczego, zwany dalej „PZZ, ustanawia regulamin sędziowski Polskiego Związku Zapaśniczego, zwany dalej „Regulaminem".</Para>
                <Clause>§ 2</Clause>
                <Numbered items={RULES} />
                <Clause>§ 3</Clause>
                <Para>Regulamin w szczególności określa:</Para>
                <Numbered items={SCOPE} />
                <Clause>
                  ROZDZIAŁ II
                  <br />
                  Podstawowe prawa i obowiązki sędziów
                </Clause>
                <Clause>§ 4</Clause>
                <Para>Sędziowie w związku z podleganiem przepisom PZZ obowiązani są w szczególności do:</Para>
                <Numbered items={DUTIES} />
                <Clause>§ 5</Clause>
                <Para>Sędziowie w ramach prowadzenia współzawodnictwa sportowego obowiązani są w szczególności do:</Para>
                <PageFoot>
                  <span>Strona 2 z 11</span>
                  <span>www.zapasy.org.pl</span>
                </PageFoot>
              </TextPage>

              <TextPage>
                <Marks />
                <RunHead $thin>REGULAMIN SĘDZIOWSKI</RunHead>
                <Items>
                  <Item><Num>1.</Num><ItemText>respektowania zasad etyki sportowej,</ItemText></Item>
                </Items>
              </TextPage>

              <TextPage>
                <Marks />
                <RunHead $thin>REGULAMIN SĘDZIOWSKI</RunHead>
                <Items $pl={34}>
                  <Item><Num>e.</Num><ItemText>datę sporządzenia wniosku,</ItemText></Item>
                </Items>
              </TextPage>
            </Pages>
          </DocCol>

          <DocScrollbar>
            <ScrollCorner><LayoutGrid size={8} color="#f0f0f0" /></ScrollCorner>
            <ChevronUp size={9} color="#eee" strokeWidth={3} />
            <ScrollThumb><Grip /><Grip /><Grip /></ScrollThumb>
            <ScrollBottom>
              <Arrow />
              <Arrow $up />
              <Arrow />
            </ScrollBottom>
          </DocScrollbar>
          <SideStrip><BlueTab /></SideStrip>
        </Workspace>
      </Main>

      <StatusBar>
        <StatusItem $w={60}>Numer strony: 1</StatusItem>
        <StatusItem $w={48}>Strona: 1/11</StatusItem>
        <StatusItem $w={42}>Sekcja: 1/1</StatusItem>
        <StatusItem $w={35}>Wiersz: 1</StatusItem>
        <StatusItem $w={45}>Kolumna: 1</StatusItem>
        <StatusItem $w={44}>Wyrazy: 2709</StatusItem>
        <Divider $h={9} />
        <SpellDot />
        Sprawdzanie pisowni
        <StatusRight>
          <Cell $w={25} $h={13}><LayoutGrid size={9} /></Cell>
          <Cell $w={20} $h={13} $bg="#dbe6f3"><FileText size={9} fill="#777" /></Cell>
          <Cell $w={24} $h={13}><List size={10} /></Cell>
          <Cell $w={25} $h={13}><File size={9} /></Cell>
          <Cell $w={26} $h={13} $gap={3}><LayoutGrid size={9} fill="#666" /><Caret /></Cell>
          <Cell $w={24} $h={13} $fs={7.9}>70 %</Cell>
          <Cell $w={12} $h={13}><Minus size={8} /></Cell>
          <Slider><SliderKnob /></Slider>
          <Cell $w={8} $h={13}><Plus size={8} /></Cell>
          <Cell $w={17} $h={13}><LayoutGrid size={7} /></Cell>
        </StatusRight>
      </StatusBar>

      <Taskbar>
        <TaskCell $w={32}>
          <svg width="12" height="12" viewBox="0 0 12 12" fill="#f2f2f2">
            <path d="M0 1.6 L5.2 1 V5.6 H0 Z M6 0.9 L12 0 V5.6 H6 Z M0 6.4 H5.2 V11 L0 10.4 Z M6 6.4 H12 V12 L6 11.1 Z" />
          </svg>
        </TaskCell>
        <TaskCell $w={32}><Search size={12} color="#ddd" style={{ transform: 'scaleX(-1)' }} /></TaskCell>
        <TaskCell $w={32}>
          <svg width="15" height="12" viewBox="0 0 15 12" fill="none" stroke="#ddd">
            <rect x="3.5" y="1.5" width="8" height="9" />
            <path d="M1 3 V9 M14 3 V9" />
          </svg>
        </TaskCell>
        <TaskCell $w={33}>
          <svg width="17" height="13" viewBox="0 0 17 13">
            <path d="M0 3 L8.5 9 L17 3 V13 H0 Z" fill="#f4f4f4" />
            <path d="M0 1.5 L8.5 0 L17 1.5 L8.5 7.5 Z" fill="#1b1b1b" stroke="#f4f4f4" />
          </svg>
        </TaskCell>
        <TaskCell $w={33} $open>
          <svg width="15" height="17" viewBox="0 0 15 17" fill="none">
            <ellipse cx="7.5" cy="8.5" rx="5.6" ry="7" stroke="#d81f2a" strokeWidth="3.4" />
          </svg>
        </TaskCell>
        <TaskCell $w={33} $open>
          <svg width="15" height="16" viewBox="0 0 15 16" fill="none">
            <path d="M2 8 H13 C13 3.5 10.5 1.5 7.5 1.5 C4 1.5 1.5 4.5 1.5 8.5 C1.5 12.5 4.5 14.5 8 14.5 C10 14.5 11.5 14 13 13" stroke="#1f8fe0" strokeWidth="2.6" />
          </svg>
        </TaskCell>
        <TaskCell $w={33} $open>
          <svg width="16" height="14" viewBox="0 0 16 14">
            <path d="M0 1 H6 L7.5 3 H16 V14 H0 Z" fill="#f0cf6a" />
            <rect x="4" y="8" width="8" height="4" fill="#4aa5d8" />
          </svg>
        </TaskCell>
        <TaskCell $w={33}>
          <svg width="14" height="14" viewBox="0 0 14 14">
            <rect width="14" height="14" fill="#e8b22e" />
            <circle cx="7" cy="6" r="3" fill="none" stroke="#fff3c8" />
            <rect x="5.5" y="9.5" width="3" height="2" fill="#fff3c8" />
          </svg>
        </TaskCell>
        <TaskCell $w={33}>
          <svg width="16" height="16" viewBox="0 0 16 16">
            <path d="M1 4 H15 V15 H1 Z" fill="#f6f6f6" />
            <path d="M5 4 C5 0 11 0 11 4" fill="none" stroke="#f6f6f6" />
            <rect x="4" y="6" width="3.6" height="3.6" fill="#e2522e" />
            <rect x="8.4" y="6" width="3.6" height="3.6" fill="#7fba2e" />
            <rect x="4" y="10.4" width="3.6" height="3.6" fill="#2e9be2" />
            <rect x="8.4" y="10.4" width="3.6" height="3.6" fill="#f2b92e" />
          </svg>
        </TaskCell>
        <TaskCell $w={37}>
          <svg width="13" height="16" viewBox="0 0 13 16">
            <path d="M6.5 0 L13 16 H9 L6.5 11 L4 16 H0 Z" fill="#28364e" />
            <circle cx="6.5" cy="6" r="1.6" fill="#c8c8c8" />
          </svg>
        </TaskCell>
        <TaskCell $w={25} $active $open>
          <svg width="16" height="16" viewBox="0 0 16 16">
            <rect width="16" height="16" rx="2" fill="#2d9bef" />
            <path d="M3 5 L5.4 11.5 L8 7 L10.6 11.5 L13 5" fill="none" stroke="#fff" strokeWidth="1.3" />
          </svg>
        </TaskCell>
        <TaskCell $w={31} $open>
          <svg width="13" height="16" viewBox="0 0 13 16">
            <rect width="13" height="16" fill="#e9ecf3" />
            <rect x="1" y="1" width="11" height="6" fill="#3b5cb8" />
            <path d="M2 13 L11 4" stroke="#b33a6a" strokeWidth="1.6" />
          </svg>
        </TaskCell>
        <TrayRight>
          <Cell $w={25} $h={27} $c="#ddd"><Users size={11} /></Cell>
          <Cell $w={20} $h={27} $c="#ddd"><ChevronUp size={12} /></Cell>
          <Cell $w={15} $h={27} $c="#ddd"><Volume2 size={11} /></Cell>
          <Cell $w={17} $h={27}>
            <svg width="12" height="8" viewBox="0 0 12 8"><path d="M2 8 C0 8 0 5 2 5 C2 2 6 0 8 3 C11 3 12 8 10 8 Z" fill="#eee" /></svg>
          </Cell>
          <Cell $w={16} $h={27}>
            <svg width="10" height="9" viewBox="0 0 10 9"><path d="M2.5 0 L5 2 L7.5 0 L10 2 L7.5 4 L10 6 L7.5 8 L5 6 L2.5 8 L0 6 L2.5 4 L0 2 Z" fill="#eee" /></svg>
          </Cell>
          <Cell $w={16} $h={27} $c="#ddd">
            <svg width="11" height="10" viewBox="0 0 11 10" fill="none" stroke="#ddd"><rect x="3.5" y="0.5" width="7" height="6" /><path d="M0.5 3 H2.5 V8.5 H0.5 Z M5 9 H9" /></svg>
          </Cell>
          <Clock>
            20:46
            <br />
            02.03.2018
          </Clock>
          <Cell $w={28} $h={27} $c="#ddd">
            <svg width="12" height="11" viewBox="0 0 12 11" fill="none" stroke="#ddd"><path d="M0.5 0.5 H11.5 V8 H7.5 L6 10 V8 H0.5 Z" /></svg>
          </Cell>
        </TrayRight>
      </Taskbar>
    </Shell>
  );
}
